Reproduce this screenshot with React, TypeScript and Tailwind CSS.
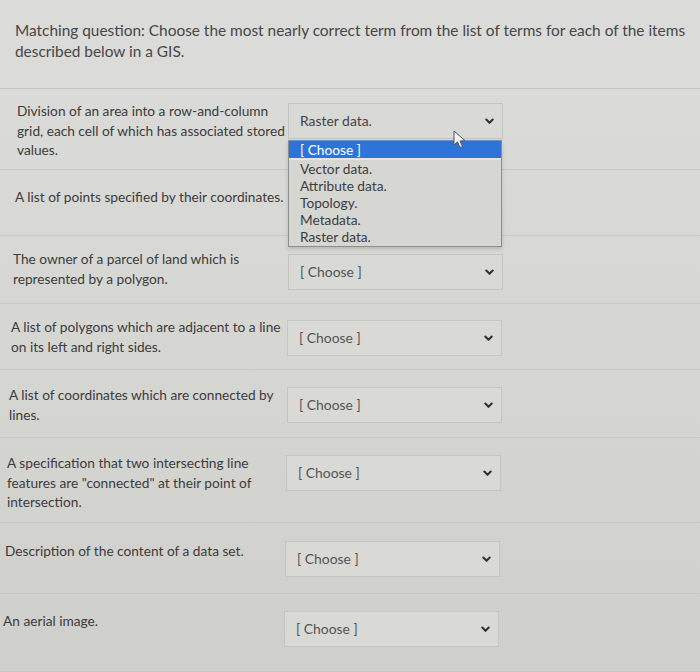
import React from 'react';

type Row = {
  text: string;
  pl: string;
  col: string;
  h: string;
  pt: string;
  selPt: string;
  value: string;
};

const rows: Row[] = [
  { text: 'Division of an area into a row-and-column grid, each cell of which has associated stored values.', pl: 'pl-[17px]', col: 'w-[288px]', h: 'h-[81px]', pt: 'pt-[12px]', selPt: 'mt-[2px]', value: 'Raster data.' },
  { text: 'A list of points specified by their coordinates.', pl: 'pl-[15px]', col: 'w-[288px]', h: 'h-[66px]', pt: 'pt-[17px]', selPt: 'mt-0', value: '' },
  { text: 'The owner of a parcel of land which is represented by a polygon.', pl: 'pl-[13px]', col: 'w-[288px]', h: 'h-[68px]', pt: 'pt-[13px]', selPt: 'mt-[5px]', value: '[ Choose ]' },
  { text: 'A list of polygons which are adjacent to a line on its left and right sides.', pl: 'pl-[11px]', col: 'w-[287px]', h: 'h-[66px]', pt: 'pt-[13px]', selPt: 'mt-[3px]', value: '[ Choose ]' },
  { text: 'A list of coordinates which are connected by lines.', pl: 'pl-[9px]', col: 'w-[287px]', h: 'h-[68px]', pt: 'pt-[15px]', selPt: 'mt-[2px]', value: '[ Choose ]' },
  { text: 'A specification that two intersecting line features are "connected" at their point of intersection.', pl: 'pl-[7px]', col: 'w-[286px]', h: 'h-[85px]', pt: 'pt-[15px]', selPt: 'mt-[2px]', value: '[ Choose ]' },
  { text: 'Description of the content of a data set.', pl: 'pl-[5px]', col: 'w-[285px]', h: 'h-[71px]', pt: 'pt-[18px]', selPt: 'mt-0', value: '[ Choose ]' },
  { text: 'An aerial image.', pl: 'pl-[3px]', col: 'w-[284px]', h: 'h-[78px]', pt: 'pt-[17px]', selPt: 'mt-[0px]', value: '[ Choose ]' },
];

const options = ['Vector data.', 'Attribute data.', 'Topology.', 'Metadata.', 'Raster data.'];

const Chevron = () => (
  <svg width="9" height="7" viewBox="0 0 9 7" className="shrink-0">
    <path d="M1.3 1.6 L4.5 4.8 L7.7 1.6" fill="none" stroke="#333" strokeWidth="2.1" strokeLinecap="round" strokeLinejoin="round" />
  </svg>
);

const Select: React.FC<{ value: string; open?: boolean }> = ({ value, open }) => (
  <div className="relative">
    <div className="flex h-[36px] w-[215px] items-center justify-between border border-[#c5c5c2] bg-[#d9d9d6] pl-[11px] pr-[8px] text-[13.9px] text-[#4a4a4a]">
      <span className={value === '[ Choose ]' ? 'text-[#555]' : 'text-[#444]'}>{value}</span>
      <Chevron />
    </div>
    {open && (
      <div className="absolute left-0 top-[37px] z-10 w-[214px] border border-[#8d8d8b] bg-[#d6d6d3] pb-[1px] text-[13.7px] leading-[17px] text-[#3d3d3d] shadow-[0_2px_4px_rgba(0,0,0,0.15)]">
        <div className="bg-[#2e74d8] px-[11px] text-white">[ Choose ]</div>
        <div className="h-[2px] bg-[#e4e4e2]" />
        {options.map((o) => (
          <div key={o} className="px-[11px]">{o}</div>
        ))}
      </div>
    )}
  </div>
);

export default function App() {
  return (
    <div
      className="relative h-[672px] w-[700px] overflow-hidden bg-gradient-to-b from-[#dcdcda] via-[#d6d6d3] to-[#cfcfcb] text-[#3f3f3f]"
      style={{ fontFamily: 'Lato, "Open Sans", sans-serif' }}
    >
      <div className="h-[89px] border-b border-[#c5c5c2] pl-[15px] pt-[20px] text-[15.4px] leading-[21px] text-[#474747]">
        Matching question: Choose the most nearly correct term from the list of terms for each of the items described below in a GIS.
      </div>

      {rows.map((r, i) => (
        <div key={i} className={`flex border-b border-[#c8c8c5] ${r.h} ${r.pt}`}>
          <div className={`${r.col} ${r.pl} shrink-0 text-[13.7px] leading-[19.5px] text-[#3c3c3c]`}>{r.text}</div>
          <div className={r.selPt}>{i === 0 ? <Select value={r.value} open /> : i === 1 ? null : <Select value={r.value} />}</div>
        </div>
      ))}

      {/* mouse pointer */}
      <svg className="absolute left-[452px] top-[130px] z-20" width="18" height="20" viewBox="0 0 18 20">
        <path d="M2 1 L2 15 L5.5 11.8 L8 17.5 L10.5 16.4 L8 11 L13 10.6 Z" fill="#f4f4f4" stroke="#555" strokeWidth="1" strokeLinejoin="round" />
      </svg>
    </div>
  );
}
